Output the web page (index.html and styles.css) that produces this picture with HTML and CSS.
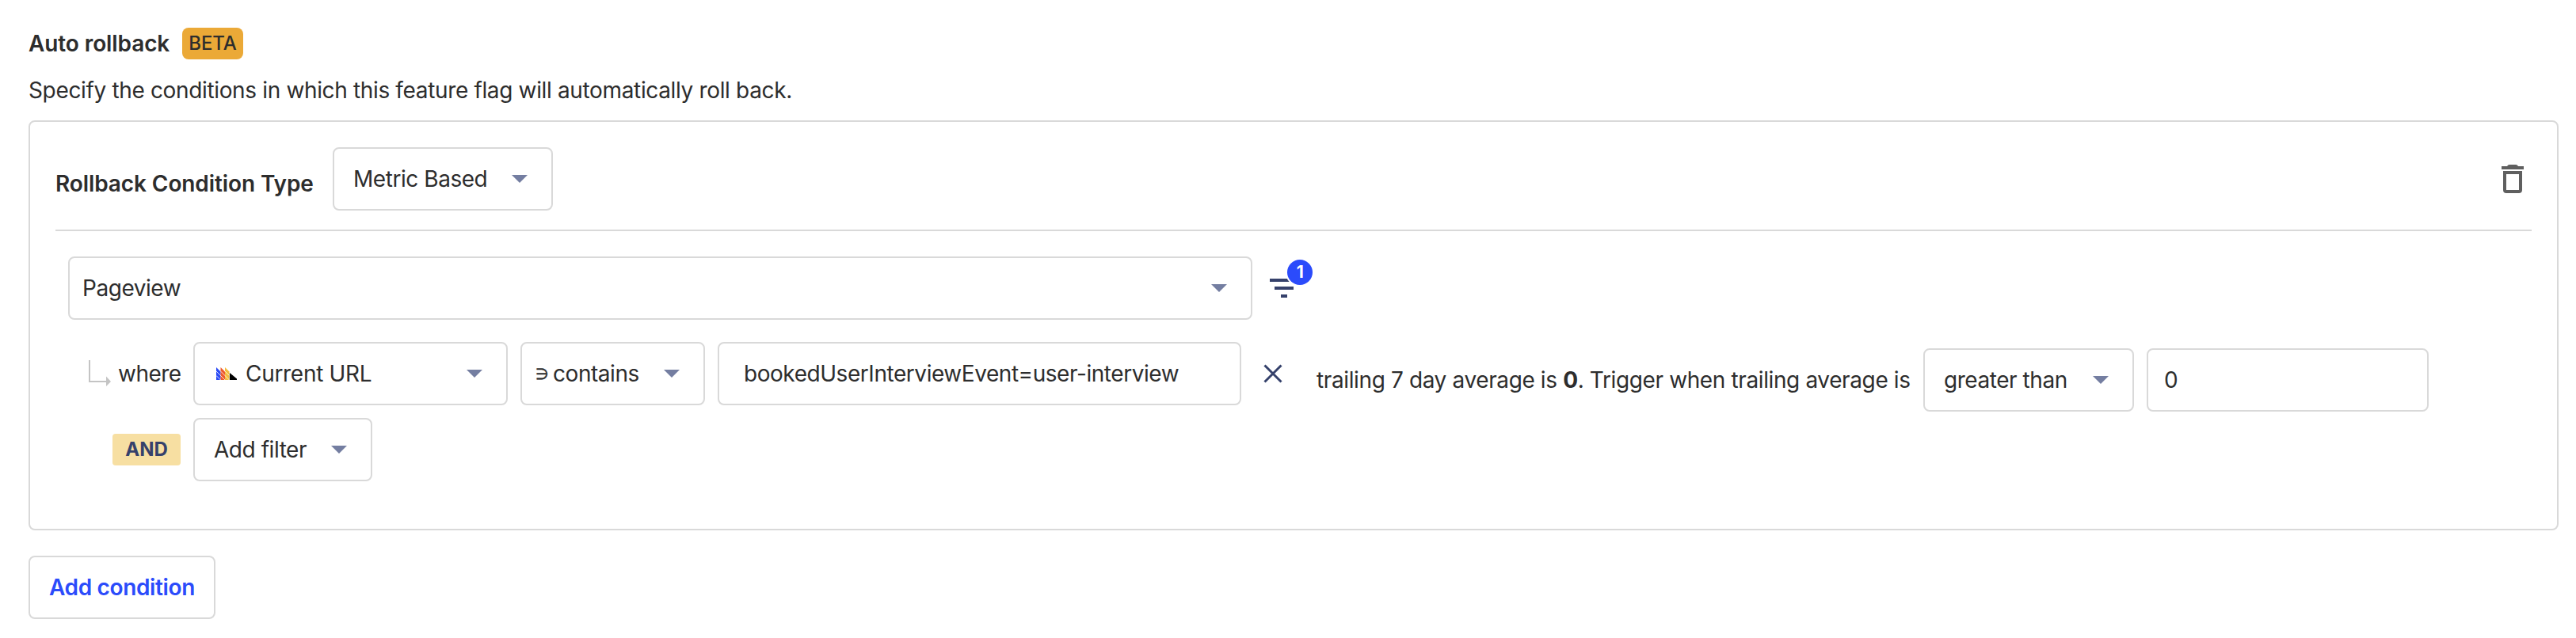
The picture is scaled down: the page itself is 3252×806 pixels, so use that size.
FILE: index.html
```html
<!DOCTYPE html>
<html lang="en">
<head>
<meta charset="utf-8">
<title>Auto rollback</title>
<link rel="stylesheet" href="styles.css">
</head>
<body>
<main class="page">
  <header class="heading">
    <h3 class="title">Auto rollback</h3>
    <span class="tag">BETA</span>
  </header>
  <p class="description">Specify the conditions in which this feature flag will automatically roll back.</p>

  <section class="card">
    <div class="card-head">
      <label class="label">Rollback Condition Type</label>
      <button class="box select metric"><span class="txt">Metric Based</span><i class="caret"></i></button>
      <svg class="trash" viewBox="0 0 28 36"><path d="M0 2h7q1-2 3-2h8q2 0 3 2h7v4H0z"/><path fill-rule="evenodd" d="M2 8h24v24q0 4-4 4H6q-4 0-4-4zM6 12v20h16V12z"/></svg>
    </div>
    <div class="card-body">
      <div class="filters">
        <div class="row event-row">
          <button class="box select event"><span class="txt">Pageview</span><i class="caret"></i></button>
          <span class="filter-toggle">
            <svg class="filter-icon" viewBox="0 0 36 24"><path d="M0 0h36v4H0zM6 10h24v4H6zM14 20h8v4h-8z"/></svg>
            <span class="count">1</span>
          </span>
        </div>
        <div class="row where-row">
          <svg class="elbow" viewBox="0 0 28 34"><path d="M0 0h2v26h20v-5.500l6 6.500-6 6v-5H0z"/></svg>
          <span class="where">where</span>
          <button class="box select property">
            <svg class="logo" viewBox="0 0 26 16">
              <path fill="#2b4bf5" d="M0 0l5.500 5.500V16H0z"/>
              <path fill="#ee5a2b" d="M5.500 0L11 5.500V16H5.500z"/>
              <path fill="#f3bd40" d="M11 0l5.500 5.500V16H11z"/>
              <path d="M17 7l9 7.500V16h-9z"/>
              <path stroke="#fff" stroke-width=".8" d="M0 5l11 11M0 10.500L5.500 16M5.500 5l11 11M11 5l5.500 5.500"/>
            </svg>
            <span class="txt">Current URL</span><i class="caret"></i>
          </button>
          <button class="box select operator"><span class="symbol">∋</span><span class="txt">contains</span><i class="caret"></i></button>
          <div class="box value"><span class="txt">bookedUserInterviewEvent=user-interview</span></div>
          <svg class="close" viewBox="0 0 24 24"><path d="M1.500 1.500l21 21M22.500 1.500l-21 21"/></svg>
        </div>
        <div class="row and-row">
          <span class="and">AND</span>
          <button class="box select add-filter"><span class="txt">Add filter</span><i class="caret"></i></button>
        </div>
      </div>
      <div class="row trigger">
        <span class="sentence">trailing 7 day average is <b>0</b>. Trigger when trailing average is</span>
        <button class="box select comparison"><span class="txt">greater than</span><i class="caret"></i></button>
        <div class="box threshold"><span class="txt">0</span></div>
      </div>
    </div>
  </section>

  <button class="box add-condition">Add condition</button>
</main>
</body>
</html>
```

FILE: styles.css
```css
* { box-sizing: border-box; }

body {
  margin: 0;
  background: #fff;
  color: #2d2d2d;
  font: 400 28px/40px Inter, "Liberation Sans", sans-serif;
  letter-spacing: -0.35px;
}

.page { padding: 34px 22px 0 36px; }
.heading { display: flex; align-items: center; height: 42px; }
.title { margin: 0; width: 194px; font-size: 28px; font-weight: 600; letter-spacing: -0.1px; white-space: nowrap; }

.tag {
  width: 77px;
  height: 40px;
  border-radius: 8px;
  background: #eba937;
  font-size: 24px;
  font-weight: 500;
  letter-spacing: -0.1px;
  text-align: center;
}

.description { margin: 18px 0; white-space: nowrap; }

.box {
  display: flex;
  align-items: center;
  flex: none;
  height: 80px;
  margin: 0;
  padding: 0 30px 0 24px;
  border: 2px solid #d9d9d9;
  border-radius: 8px;
  background: #fff;
  color: inherit;
  font: inherit;
  letter-spacing: -0.45px;
  text-align: left;
  white-space: nowrap;
}

.select { justify-content: space-between; }

.caret {
  flex: none;
  width: 20px;
  height: 10px;
  background: #747ea1;
  clip-path: polygon(0 0, 100% 0, 50% 100%);
}

.card {
  height: 518px;
  padding: 32px;
  border: 2px solid #d9d9d9;
  border-radius: 8px;
}

.card-head {
  display: flex;
  height: 106px;
  border-bottom: 2px solid #d9d9d9;
}

.label { width: 350px; padding-top: 26px; font-weight: 600; letter-spacing: -0.1px; white-space: nowrap; }
.metric { width: 278px; }
.trash { width: 28px; height: 36px; margin: 22px 10px 0 auto; fill: #5f5f5f; }

.card-body { display: flex; padding: 32px 0 0 16px; }
.filters { width: 1576px; }
.row { display: flex; align-items: center; }

.event { width: 1495px; padding-left: 16px; }
.filter-toggle { position: relative; width: 36px; height: 24px; margin-left: 22px; }
.filter-icon { display: block; width: 36px; height: 24px; fill: #35416b; }

.count {
  position: absolute;
  top: -24px;
  left: 22px;
  width: 32px;
  height: 32px;
  border-radius: 50%;
  background: #2b4bfb;
  box-shadow: 0 0 0 2px #fff;
  color: #fff;
  font-size: 21px;
  font-weight: 700;
  line-height: 32px;
  text-align: center;
}

.where-row { margin-top: 28px; padding-left: 26px; }
.elbow { width: 28px; height: 34px; fill: #c4c4c4; }
.where { width: 95px; margin-left: 9px; letter-spacing: -0.5px; }
.property { width: 397px; letter-spacing: -0.3px; }
.logo { flex: none; width: 26px; height: 16px; margin: 0 11px 0 3px; }
.property .txt { margin-right: auto; }
.operator { width: 233px; margin-left: 16px; padding-left: 17px; }
.symbol { flex: none; width: 22px; padding-top: 2px; font-size: 19px; -webkit-text-stroke: 0.4px #2d2d2d; }
.operator .txt { margin-right: auto; }
.value { width: 661px; margin-left: 16px; padding-left: 31px; }
.close { width: 24px; height: 24px; margin-left: 28px; fill: none; stroke: #35416b; stroke-width: 3; }

.and-row { margin-top: 16px; padding-left: 56px; }

.and {
  width: 86px;
  height: 40px;
  margin-right: 16px;
  border-radius: 4px;
  background: #f7dfa2;
  color: #35416b;
  font-size: 24px;
  font-weight: 700;
  letter-spacing: 0;
  text-align: center;
}

.add-filter { width: 226px; }

.trigger { align-self: flex-start; margin-top: 116px; }
.sentence { width: 766px; letter-spacing: -0.38px; white-space: nowrap; }
.comparison { width: 266px; padding-left: 24px; }
.threshold { width: 356px; margin-left: 16px; padding-left: 20px; letter-spacing: 0; }

.add-condition { width: 236px; margin-top: 32px; padding: 0 0 0 24px; color: #2b4bfb; font-weight: 600; letter-spacing: -0.35px; }
```
